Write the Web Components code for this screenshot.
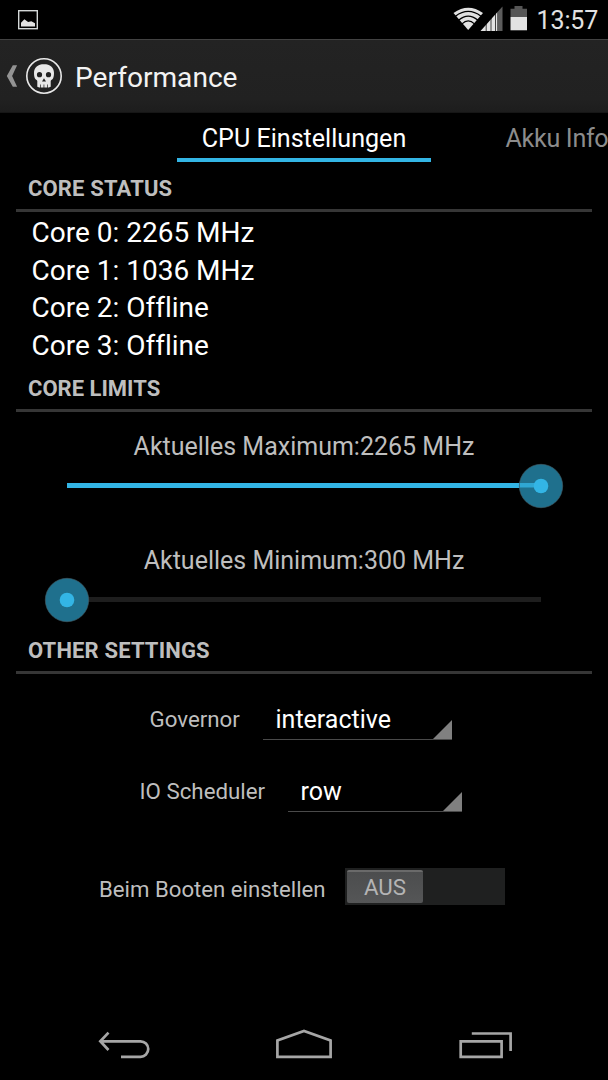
<!DOCTYPE html>
<html lang="de">
<head>
<meta charset="utf-8">
<title>Performance</title>
<style>
  html, body {
    margin: 0;
    background: #000;
  }

  body {
    width: 608px;
    height: 1080px;
    overflow: hidden;
    color: #fff;
    font-family: Roboto, "Noto Sans", sans-serif;
    font-variant-ligatures: none;
  }
</style>
</head>
<body>
<performance-screen></performance-screen>

<script>
class StatusBar extends HTMLElement {
  connectedCallback() {
    this.attachShadow({ mode: 'open' });
    this.shadowRoot.innerHTML = `
      <style>
        :host {
          display: flex;
          height: 39px;
          justify-content: space-between;
          background: #000;
        }

        svg { display: block; }

        .right { display: flex; }

        .clock {
          width: 71.5px;
          font-size: 25px;
          line-height: 42px;
          letter-spacing: -0.1px;
          color: #e2e2e2;
        }
      </style>
      <svg width="60" height="39" viewBox="0 0 60 39">
        <rect x="18.700" y="10.700" width="18.600" height="18" fill="none" stroke="#d4d8d8" stroke-width="1.400"/>
        <path d="M21 26.500v-3.800l3.400-3.400 3.700 2.800 3.200-.9 3.700 2.100v3.200z" fill="#e2e2e2"/>
      </svg>
      <div class="right">
        <svg width="84" height="39" viewBox="452.500 0 84 39">
          <path d="M453 13Q467.700 2.500 482.500 13L467.700 30z" fill="#e2e2e2"/>
          <g fill="none" stroke="#000" stroke-width="1.300">
            <path d="M455 16.200Q467.700 6.600 480.500 16.200"/>
            <path d="M458.300 20.100Q467.700 12.100 477.200 20.100"/>
            <path d="M461.500 23.900Q467.700 17.900 474 23.900"/>
          </g>
          <path d="M480 31L497 12.100V31z" fill="#e2e2e2"/>
          <path d="M497 12.100l5-5.600V31h-5z" fill="#5c5c5c"/>
          <path d="M485.700 22v9M490.500 17v14M495 12v19" stroke="#000" stroke-opacity=".8" stroke-width=".9"/>
          <path d="M510 8.800h4V6h8v2.800h4.500V17H510z" fill="#565656"/>
          <path d="M510 17h16.500v13.300H510z" fill="#e2e2e2"/>
        </svg>
        <div class="clock">13:57</div>
      </div>
    `;
  }
}

class ActionBar extends HTMLElement {
  connectedCallback() {
    this.attachShadow({ mode: 'open' });
    this.shadowRoot.innerHTML = `
      <style>
        :host {
          display: flex;
          box-sizing: border-box;
          height: 74px;
          border-top: 1px solid #424242;
          border-bottom: 1px solid #161616;
          background: linear-gradient(#232323, #212121 82%, #1d1d1d);
        }

        .title {
          margin-left: 5px;
          font-size: 28.1px;
          line-height: 75px;
          color: #f3f3f3;
        }
      </style>
      <svg width="70" height="72" viewBox="0 40 70 72">
        <path d="M12.800 65.300h4.300l-5 10.700 5 10.700h-4.300l-6-10.700z" fill="#939393"/>
        <circle cx="44" cy="76" r="17.200" fill="none" stroke="#e8e8e8" stroke-width="1.600"/>
        <path d="M44 64c-6 0-10 3.600-10 9 0 2.300.4 4.200 1 5.600.6 1.300 2 1.200 2.300 2.300v5.800l2 .9h9.400l2-.9v-5.800c.3-1.100 1.700-1 2.300-2.300.6-1.400 1-3.300 1-5.600 0-5.400-4-9-10-9z" fill="#e8e8e8"/>
        <g fill="#222">
          <circle cx="39.500" cy="74.700" r="2.600"/>
          <circle cx="48.500" cy="74.700" r="2.600"/>
          <path d="M44 78.300l2 3.100h-4z"/>
          <path d="M40.200 84.500h.7v3.500h-.7zM43.600 84.500h.7v3.500h-.7zM47 84.500h.7v3.500H47z"/>
        </g>
      </svg>
      <div class="title"><slot></slot></div>
    `;
  }
}

class TabStrip extends HTMLElement {
  connectedCallback() {
    this.attachShadow({ mode: 'open' });
    this.shadowRoot.innerHTML = `
      <style>
        :host {
          display: flex;
          height: 50px;
          padding-left: 177px;
          overflow: hidden;
          font-size: 25.1px;
          line-height: 51px;
          white-space: nowrap;
        }

        .active {
          flex: none;
          box-sizing: border-box;
          width: 254px;
          height: 49px;
          border-bottom: 4px solid #33b5e5;
          text-align: center;
        }

        .next {
          flex: none;
          padding-left: 74.5px;
          letter-spacing: -0.3px;
          color: #8c8c8c;
        }
      </style>
      <div class="active"><slot></slot></div>
      <div class="next"><slot name="next"></slot></div>
    `;
  }
}

class SectionHeader extends HTMLElement {
  connectedCallback() {
    this.attachShadow({ mode: 'open' });
    this.shadowRoot.innerHTML = `
      <style>
        :host {
          display: block;
          box-sizing: border-box;
          height: 49px;
          margin: 0 16px;
          padding-left: 12px;
          border-bottom: 3px solid #363636;
          font-size: 22px;
          font-weight: 700;
          line-height: 52px;
          letter-spacing: var(--tracking, 0);
          color: #bebebe;
        }
      </style>
      <slot></slot>
    `;
  }
}

class CoreList extends HTMLElement {
  connectedCallback() {
    this.attachShadow({ mode: 'open' });
    this.shadowRoot.innerHTML = `
      <style>
        :host {
          display: block;
          box-sizing: border-box;
          height: 151px;
          padding: 1.8px 0 0 31.5px;
        }

        ::slotted(div) {
          font-size: 28px;
          line-height: 37.7px;
        }
      </style>
      <slot></slot>
    `;
  }
}

class FreqSlider extends HTMLElement {
  connectedCallback() {
    const cx = 67 + 474 * Number(this.getAttribute('value'));
    this.attachShadow({ mode: 'open' });
    this.shadowRoot.innerHTML = `
      <style>
        :host {
          display: block;
          height: 114px;
        }

        .label {
          height: 49px;
          font-size: 25px;
          line-height: 69px;
          text-align: center;
          color: #bebebe;
        }

        svg { display: block; }
      </style>
      <div class="label"><slot></slot></div>
      <svg width="608" height="50" viewBox="0 0 608 50">
        <rect x="67" y="22" width="474" height="5" fill="#1e1e1e"/>
        <rect x="67" y="22" width="${cx - 67}" height="5" fill="#33b5e5"/>
        <circle cx="${cx}" cy="25" r="21.700" fill="#1f708d" stroke="#45606a" stroke-width=".6"/>
        <rect x="${cx - 21}" y="22" width="21" height="4.500" fill="#33b5e5" fill-opacity="${cx > 67 ? 0.8 : 0}"/>
        <circle cx="${cx}" cy="25" r="7.300" fill="#33b5e5"/>
      </svg>
    `;
  }
}

class SpinnerRow extends HTMLElement {
  connectedCallback() {
    this.attachShadow({ mode: 'open' });
    this.shadowRoot.innerHTML = `
      <style>
        :host {
          display: flex;
          height: 72px;
          align-items: flex-start;
        }

        .label {
          box-sizing: border-box;
          width: var(--box-x);
          padding-left: var(--label-x);
          font-size: 22.3px;
          line-height: 44px;
          white-space: nowrap;
          color: #bebebe;
        }

        .box {
          display: flex;
          box-sizing: border-box;
          width: var(--box-w);
          height: 43px;
          padding-left: 12.5px;
          justify-content: space-between;
          align-items: flex-end;
          border-bottom: 1px solid #4a4a4a;
          font-size: 25px;
          line-height: 39px;
        }

        svg { display: block; }
      </style>
      <div class="label"><slot></slot></div>
      <div class="box">
        <slot name="value"></slot>
        <svg width="19" height="19" viewBox="0 0 19 19"><path d="M19 0v19H0z" fill="#808080"/></svg>
      </div>
    `;
  }
}

class ToggleRow extends HTMLElement {
  connectedCallback() {
    this.attachShadow({ mode: 'open' });
    this.shadowRoot.innerHTML = `
      <style>
        :host {
          display: flex;
          height: 37px;
          padding-left: 99px;
        }

        .label {
          width: 246px;
          font-size: 22.2px;
          line-height: 42px;
          white-space: nowrap;
          color: #bebebe;
        }

        .track {
          box-sizing: border-box;
          width: 160px;
          padding: 2px;
          background: #1f2020;
        }

        .thumb {
          box-sizing: border-box;
          width: 76px;
          height: 33px;
          border-top: 2px solid #6a6a6a;
          border-radius: 2px;
          background: linear-gradient(#4c4d4e, #555657);
          font-size: 22.3px;
          line-height: 30px;
          text-align: center;
          color: #b4b4b4;
        }
      </style>
      <div class="label"><slot></slot></div>
      <div class="track"><div class="thumb"><slot name="state"></slot></div></div>
    `;
  }
}

class NavBar extends HTMLElement {
  connectedCallback() {
    this.attachShadow({ mode: 'open' });
    this.shadowRoot.innerHTML = `
      <style>
        :host { display: block; }
        svg { display: block; }
      </style>
      <svg width="608" height="80" viewBox="0 1000 608 80" fill="none" stroke="#a6a6a6" stroke-width="2.700">
        <path d="M108.500 1032.600l-8.200 8.700 8.200 8.700M100.500 1041.300h40a7.750 7.750 0 0 1 0 15.500H121"/>
        <path d="M277.400 1056.900v-16.400l26.600-9.500 26.600 9.500v16.400z"/>
        <path d="M460.700 1041.300h40.900v15.600h-40.900zM471.800 1033.500h38.800v17.500"/>
      </svg>
    `;
  }
}

class PerformanceScreen extends HTMLElement {
  connectedCallback() {
    this.attachShadow({ mode: 'open' });
    this.shadowRoot.innerHTML = `
      <style>
        :host {
          display: flex;
          flex-direction: column;
          width: 608px;
          height: 1080px;
          background: #000;
        }

        .status { --tracking: 0.15px; }

        .other {
          --tracking: 0.15px;
          margin-top: -15px;
        }

        .governor {
          --label-x: 149.5px;
          --box-x: 263px;
          --box-w: 189px;
          margin-top: 23px;
        }

        .scheduler {
          --label-x: 139.5px;
          --box-x: 288px;
          --box-w: 174px;
        }

        toggle-row { margin-top: 27px; }
        nav-bar { margin-top: auto; }
      </style>
      <status-bar></status-bar>
      <action-bar>Performance</action-bar>
      <tab-strip>CPU Einstellungen<span slot="next">Akku Info</span></tab-strip>
      <section-header class="status">CORE STATUS</section-header>
      <core-list>
        <div>Core 0: 2265 MHz</div>
        <div>Core 1: 1036 MHz</div>
        <div>Core 2: Offline</div>
        <div>Core 3: Offline</div>
      </core-list>
      <section-header>CORE LIMITS</section-header>
      <freq-slider value="1">Aktuelles Maximum:2265 MHz</freq-slider>
      <freq-slider value="0">Aktuelles Minimum:300 MHz</freq-slider>
      <section-header class="other">OTHER SETTINGS</section-header>
      <spinner-row class="governor">Governor<span slot="value">interactive</span></spinner-row>
      <spinner-row class="scheduler">IO Scheduler<span slot="value">row</span></spinner-row>
      <toggle-row>Beim Booten einstellen<span slot="state">AUS</span></toggle-row>
      <nav-bar></nav-bar>
    `;
  }
}

customElements.define('status-bar', StatusBar);
customElements.define('action-bar', ActionBar);
customElements.define('tab-strip', TabStrip);
customElements.define('section-header', SectionHeader);
customElements.define('core-list', CoreList);
customElements.define('freq-slider', FreqSlider);
customElements.define('spinner-row', SpinnerRow);
customElements.define('toggle-row', ToggleRow);
customElements.define('nav-bar', NavBar);
customElements.define('performance-screen', PerformanceScreen);
</script>
</body>
</html>
